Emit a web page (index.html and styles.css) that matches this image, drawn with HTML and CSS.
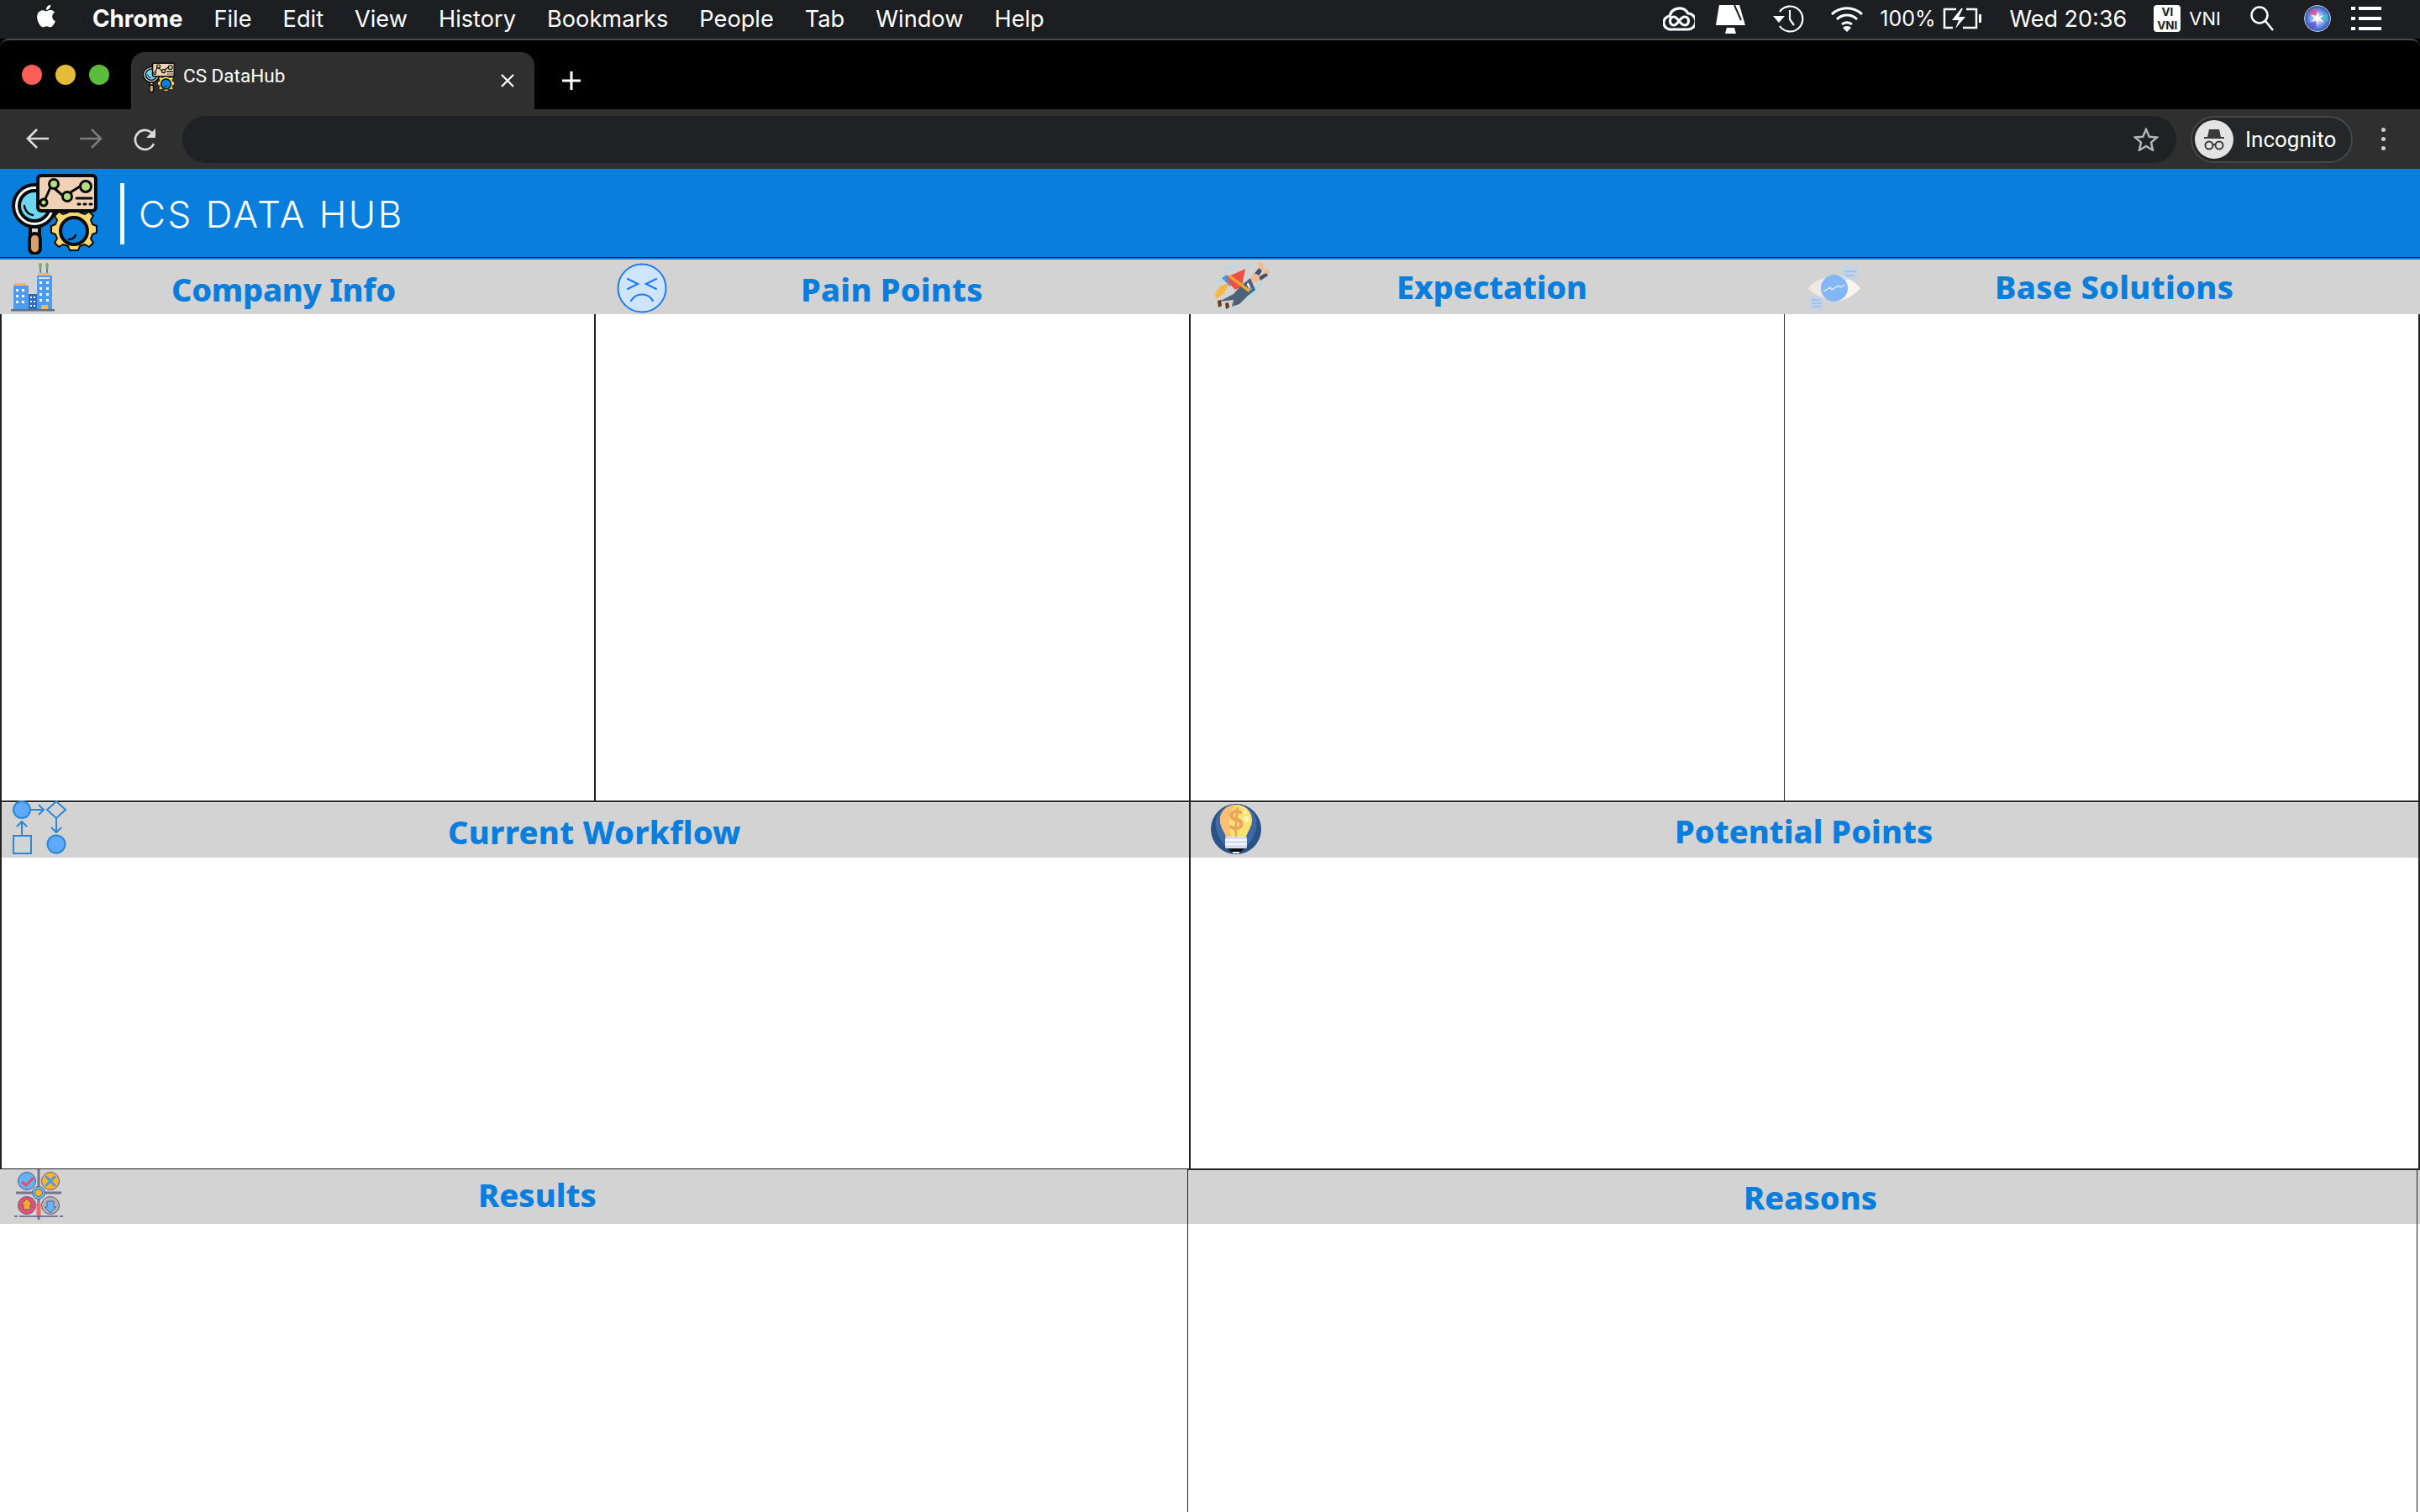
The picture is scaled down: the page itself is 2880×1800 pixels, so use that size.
FILE: index.html
```html
<!DOCTYPE html>
<html lang="en">
<head>
<meta charset="utf-8">
<title>CS DataHub</title>
<link rel="stylesheet" href="styles.css">
</head>
<body>
<svg class="defs" width="0" height="0" aria-hidden="true">
  <symbol id="logo" viewBox="0 0 102 96">
    <g stroke="#0b0b0b" stroke-width="4" stroke-linejoin="round" stroke-linecap="round">
      <rect x="22" y="63" width="11" height="9" fill="#d9d9d9"/>
      <rect x="21" y="71" width="13" height="24" rx="6.5" fill="#d8a06c"/>
      <circle cx="27" cy="38" r="25" fill="#fff"/>
      <circle cx="27" cy="38" r="18" fill="#6fd6f2"/>
      <path d="M74 41l5 0 2 5 6 2 5-3 5 5-3 5 2 5 5 2v8l-5 2-2 5 3 5-5 5-5-3-6 2-2 5h-10l-2-5-6-2-5 3-5-5 3-5-2-5-5-2v-8l5-2 2-5-3-5 5-5 5 3 6-2 2-5z" fill="#fbd96f" stroke-width="2"/>
      <circle cx="74" cy="68" r="16" fill="#0a7edc"/>
      <rect x="31" y="2" width="69" height="42" rx="4" fill="#f0d1b6"/>
      <path d="M38 34L47 14M47 14L62 27M62 27L81 15" fill="none" stroke-width="3"/>
      <circle cx="38" cy="34" r="4" fill="#b4e07e" stroke-width="3"/>
      <circle cx="50" cy="12" r="5.5" fill="#b4e07e" stroke-width="3"/>
      <circle cx="66" cy="27" r="5.5" fill="#b4e07e" stroke-width="3"/>
      <circle cx="88" cy="15" r="6.5" fill="#b4e07e" stroke-width="3"/>
      <path d="M77 29h18" fill="none" stroke-width="3"/>
      <path d="M79 36h2M86 36h2M93 36h2" fill="none" stroke-width="3"/>
      <path d="M68 78a9 9 0 0 0 8-5" fill="none" stroke-width="2.5"/>
      <path d="M15 38a12 12 0 0 0 10 11" fill="none" stroke-width="2.5"/>
    </g>
  </symbol>
</svg>

<div class="menubar">
  <div class="menu-left">
    <svg class="apple" viewBox="0 0 24 24"><path fill="#fff" d="M18.71 19.5c-.83 1.24-1.71 2.45-3.05 2.47-1.34.03-1.77-.79-3.29-.79-1.53 0-2 .77-3.27.82-1.31.05-2.3-1.32-3.14-2.53C4.25 17 2.94 12.45 4.7 9.39c.87-1.52 2.43-2.48 4.12-2.51 1.28-.02 2.5.87 3.29.87.78 0 2.26-1.07 3.81-.91.65.03 2.47.26 3.64 1.98-.09.06-2.17 1.28-2.15 3.81.03 3.02 2.65 4.03 2.68 4.04-.03.07-.42 1.44-1.38 2.83M13 3.5c.73-.83 1.94-1.46 2.94-1.5.13 1.17-.34 2.35-1.04 3.19-.69.85-1.83 1.51-2.95 1.42-.15-1.15.41-2.35 1.05-3.11z"/></svg>
    <span class="menu-app">Chrome</span>
    <span>File</span><span>Edit</span><span>View</span><span>History</span><span>Bookmarks</span><span>People</span><span>Tab</span><span>Window</span><span>Help</span>
  </div>
  <div class="menu-right">
    <svg class="st st-cc" viewBox="0 0 38 30" fill="none" stroke="#fff" stroke-width="3.200"><path d="M10 28a8 8 0 0 1-2-16A12 12 0 0 1 30 9a9.500 9.500 0 0 1-1 19z"/><path d="M13 23c-6 0-6-10 0-10 5 0 7 10 13 10 6 0 6-10 0-10-6 0-8 10-13 10z"/></svg>
    <svg class="st st-lamp" viewBox="0 0 36 36"><path fill="#fff" d="M4 2h24l7 24H0z"/><path fill="none" stroke="#1c1e21" stroke-width="2" d="M22 2l8 18"/><path fill="#fff" d="M13 29h9l2 7H11z"/></svg>
    <svg class="st st-clock" viewBox="0 0 38 34" fill="none" stroke="#fff" stroke-width="2.200"><path d="M9 9a15 15 0 1 1 0 17"/><path fill="#fff" stroke="none" d="M1 14h14l-7 8z"/><path d="M21 7v11l5 7"/></svg>
    <svg class="st st-wifi" viewBox="0 0 40 32" fill="none" stroke="#fff" stroke-width="3"><path d="M2 11a26 26 0 0 1 36 0M8 17a17 17 0 0 1 24 0M14 23a9 9 0 0 1 12 0"/><path fill="#fff" stroke="none" d="M20 32l-5-5a7 7 0 0 1 10 0z"/></svg>
    <span class="st-pct">100%</span>
    <svg class="st st-batt" viewBox="0 0 46 26" fill="none" stroke="#fff" stroke-width="2.500"><path d="M16 2H2v22h10M28 2h12v22H24"/><path fill="#fff" stroke="none" d="M22 1L11 15h8l-4 10 12-14h-8l5-10z"/><rect x="43" y="8" width="3" height="10" fill="#fff" stroke="none"/></svg>
    <span class="st-time">Wed 20:36</span>
    <span class="st-vni"><span>VI</span><span>VNI</span></span>
    <span class="st-vni-text">VNI</span>
    <svg class="st st-search" viewBox="0 0 28 30" fill="none" stroke="#fff" stroke-width="2.500"><circle cx="11" cy="11" r="9.500"/><path d="M18 18l9 11"/></svg>
    <svg class="st st-siri" viewBox="0 0 32 32">
      <defs><radialGradient id="siri" cx="50%" cy="50%" r="55%"><stop offset="0" stop-color="#f4f6ff"/><stop offset=".45" stop-color="#8aa8ec"/><stop offset=".8" stop-color="#3a64c8"/><stop offset="1" stop-color="#222a58"/></radialGradient></defs>
      <circle cx="16" cy="16" r="15.500" fill="url(#siri)" stroke="#cfd3dc" stroke-width="1"/>
      <path d="M5 10a13 13 0 0 1 11-6l-1 9z" fill="#e0508c" opacity=".8"/>
      <path d="M27 9a13 13 0 0 1 1 11l-8-4z" fill="#35c4c8" opacity=".8"/>
      <path d="M5 22a13 13 0 0 0 9 6l1-9z" fill="#6a4ad0" opacity=".7"/>
      <path d="M16 8l2 6 6-2-5 4 5 5-7-3-1 6-2-6-6 2 5-4-5-5 6 2z" fill="#fff" opacity=".9"/>
    </svg>
    <svg class="st st-list" viewBox="0 0 36 28" fill="#fff"><rect x="0" y="0" width="5" height="4"/><rect x="9" y="0" width="27" height="4"/><rect x="0" y="12" width="5" height="4"/><rect x="9" y="12" width="27" height="4"/><rect x="0" y="24" width="5" height="4"/><rect x="9" y="24" width="27" height="4"/></svg>
  </div>
</div>

<div class="browser">
  <div class="tabstrip">
    <div class="lights"><i class="light red"></i><i class="light yellow"></i><i class="light green"></i></div>
    <div class="tab">
      <svg class="favicon"><use href="#logo"/></svg>
      <span class="tab-title">CS DataHub</span>
      <svg class="tab-close" viewBox="0 0 16 16" stroke="#fff" stroke-width="2.200"><path d="M1 1l14 14M15 1L1 15"/></svg>
    </div>
    <svg class="newtab" viewBox="0 0 22 22" stroke="#fff" stroke-width="3"><path d="M11 0v22M0 11h22"/></svg>
  </div>
  <div class="toolbar">
    <svg class="nav nav-back" viewBox="0 0 28 26" fill="none" stroke="#dcdcdc" stroke-width="2.600"><path d="M28 13H3M14 2L3 13l11 11"/></svg>
    <svg class="nav nav-fwd" viewBox="0 0 28 26" fill="none" stroke="#7b7b7b" stroke-width="2.600"><path d="M0 13h25M14 2l11 11-11 11"/></svg>
    <svg class="nav nav-reload" viewBox="0 0 28 28" fill="none" stroke="#dcdcdc" stroke-width="2.600"><path d="M24 19a11.500 11.500 0 1 1-1-11"/><path fill="#dcdcdc" stroke="none" d="M26 1v11H15z"/></svg>
    <div class="omnibox">
      <svg class="star" viewBox="0 0 30 28" fill="none" stroke="#b4b4b4" stroke-width="2.500"><path d="M15 2l3.800 8.700 9.200.8-7 6.100 2.100 9.200L15 22l-8.100 4.800L9 17.600 2 11.500l9.200-.8z"/></svg>
    </div>
    <div class="profile">
      <span class="avatar">
        <svg viewBox="0 0 32 32" fill="#3a3a3a"><path d="M10 4h12l2 9h4v2H4v-2h4z"/><circle cx="10" cy="23" r="4.500" fill="none" stroke="#3a3a3a" stroke-width="2"/><circle cx="22" cy="23" r="4.500" fill="none" stroke="#3a3a3a" stroke-width="2"/><path d="M14.500 22h3" stroke="#3a3a3a" stroke-width="2"/></svg>
      </span>
      <span class="profile-name">Incognito</span>
    </div>
    <div class="kebab"><i></i><i></i><i></i></div>
  </div>
</div>

<header class="apphead">
  <svg class="applogo"><use href="#logo"/></svg>
  <span class="appdiv"></span>
  <span class="appname">CS DATA HUB</span>
</header>

<main class="board">
  <section class="row row-a">
    <article class="cell cell-a1">
      <div class="head head-company">
        <svg class="ic ic-company" viewBox="0 0 52 58">
          <path d="M35 2v12M43 2v12" stroke="#3a6a8a" stroke-width="1.500"/>
          <ellipse cx="35" cy="3" rx="1.800" ry="3.500" fill="#7fa75f"/><ellipse cx="43" cy="3" rx="1.800" ry="3.500" fill="#7fa75f"/>
          <rect x="32" y="12" width="14" height="3" fill="#f2b95c"/>
          <rect x="31" y="15" width="18" height="41" fill="#4d9cf0"/>
          <rect x="4" y="24" width="14" height="3" fill="#f2b95c"/>
          <rect x="3" y="27" width="18" height="29" fill="#4d9cf0"/>
          <rect x="21" y="37" width="10" height="19" fill="#2c6bb8"/>
          <path d="M33 18h13" stroke="#fff" stroke-width="1.500"/>
          <g fill="#fff">
            <rect x="6" y="31" width="3" height="3"/><rect x="13" y="31" width="3" height="3"/><rect x="6" y="38" width="3" height="3"/><rect x="13" y="38" width="3" height="3"/><rect x="6" y="45" width="3" height="3"/><rect x="13" y="45" width="3" height="3"/>
            <rect x="34" y="22" width="3" height="3"/><rect x="42" y="22" width="3" height="3"/><rect x="34" y="29" width="3" height="3"/><rect x="42" y="29" width="3" height="3"/><rect x="34" y="36" width="3" height="3"/><rect x="42" y="36" width="3" height="3"/><rect x="34" y="43" width="3" height="3"/><rect x="42" y="43" width="3" height="3"/>
            <rect x="23" y="40" width="2" height="2"/><rect x="27" y="40" width="2" height="2"/><rect x="23" y="45" width="2" height="2"/><rect x="27" y="45" width="2" height="2"/><rect x="23" y="50" width="2" height="2"/><rect x="27" y="50" width="2" height="2"/>
          </g>
          <rect x="36" y="50" width="8" height="6" fill="#f2b95c"/>
          <rect x="0" y="55" width="52" height="2.500" fill="#5d7288"/>
        </svg>
        <h2 class="title">Company Info</h2>
      </div>
      <div class="body"></div>
    </article>
    <article class="cell cell-a2">
      <div class="head head-pain">
        <svg class="ic ic-pain" viewBox="0 0 60 60" fill="none" stroke="#1f7bef" stroke-linecap="round">
          <circle cx="30" cy="30" r="28.500" fill="#cfe4ff" stroke-width="2"/>
          <path d="M13 19l12 6-12 6M47 19l-12 6 12 6" stroke-width="2.200"/>
          <path d="M17 45c6-10 20-10 26 0" stroke-width="2.200"/>
        </svg>
        <h2 class="title">Pain Points</h2>
      </div>
      <div class="body"></div>
    </article>
    <article class="cell cell-a3">
      <div class="head head-expect">
        <svg class="ic ic-expect" viewBox="0 0 85 66">
          <g stroke="#a5dfe8" stroke-width="2"><path d="M24 13L36 7M13 28l6-3M49 9l8-5M47 49l15-12M53 43l15-16M34 60l5-3"/></g>
          <path d="M11 43l6-10 12-5-8 14-9 6z" fill="#fbb63b"/>
          <path d="M19 23l6-4 9 8-5 6z" fill="#3d9be0"/>
          <path d="M25 22l22-10-4 21-8 4-8-9z" fill="#ee5047"/>
          <path d="M16 51l17-9 9-10 11-9 6 14-9 7-10 10-9 3 2-8-8 1z" fill="#4f6079"/>
          <path d="M14 50l4-1 1 7-4 2z M23 53l4-1 1 6-4 2z" fill="#6b3a1c"/>
          <path d="M30 20l23 17-2 3-24-18z" fill="#f0a52b"/>
          <path d="M50 28l5 8-2 2-4-7z" fill="#fff"/>
          <path d="M52 30l3 7-2 1z" fill="#2f7fd8"/>
          <path d="M54 23l9-12 4 3-7 12z M63 22l9-6 2 4-9 6z" fill="#42526a"/>
          <circle cx="59" cy="23" r="5" fill="#f4b78f"/>
          <path d="M62 5l6 0 1 7-4 1z M69 12l6 1 1 4-6 1z" fill="#f4b78f"/>
        </svg>
        <h2 class="title">Expectation</h2>
      </div>
      <div class="body"></div>
    </article>
    <article class="cell cell-a4">
      <div class="head head-base">
        <svg class="ic ic-base" viewBox="0 0 62 52">
          <path d="M0 26C14 8 48 8 62 26 48 44 14 44 0 26z" fill="#f0e8e2"/>
          <path d="M34 10C46 12 54 18 62 26 54 34 46 40 34 42z" fill="#f8f4f0"/>
          <circle cx="31" cy="26" r="16" fill="#82b6f6"/>
          <path d="M18 30l8-5 2 3 8-5 2 2 6-3" fill="none" stroke="#d2e6fb" stroke-width="1.500"/>
          <g fill="none" stroke="#a9cdf7" stroke-width="1.500">
            <rect x="40" y="0" width="20" height="16" fill="#bcd5f2" stroke="none" opacity=".6"/>
            <rect x="2" y="36" width="16" height="16" fill="#bcd5f2" stroke="none" opacity=".6"/>
            <path d="M44 6h13M44 11h9M4 40h10M4 44h12M4 48h12" stroke="#8fbcf2"/>
          </g>
        </svg>
        <h2 class="title">Base Solutions</h2>
      </div>
      <div class="body"></div>
    </article>
  </section>

  <section class="row row-b">
    <article class="cell cell-b1">
      <div class="head head-flow">
        <svg class="ic ic-flow" viewBox="0 0 66 66" fill="none" stroke="#2a88d4" stroke-width="2">
          <circle cx="11" cy="11" r="10" fill="#5ea9fb"/>
          <path d="M21 11h15M31 5l6 6-6 6"/>
          <path d="M52 1l11 10-11 10-11-10z"/>
          <path d="M52 21v17M46 32l6 6 6-6"/>
          <circle cx="52" cy="52" r="10.500" fill="#5ea9fb"/>
          <rect x="1" y="42" width="21" height="21"/>
          <path d="M11 42V25M5 31l6-6 6 6"/>
        </svg>
        <h2 class="title">Current Workflow</h2>
      </div>
      <div class="body"></div>
    </article>
    <article class="cell cell-b2">
      <div class="head head-potential">
        <svg class="ic ic-potential" viewBox="0 0 60 60">
          <circle cx="30" cy="30" r="30" fill="#2b5285"/>
          <path d="M6 18C4 34 12 48 22 52h16c10-4 18-18 16-34C50 6 40 1 30 1S10 6 6 18z" fill="#3e6aa6"/>
          <path d="M30 1c-11 0-19 8-19 18 0 10 6 13 8 24h22c2-11 8-14 8-24C49 9 41 1 30 1z" fill="#fee26e"/>
          <path d="M30 1c-11 0-19 8-19 18 0 10 6 13 8 24h6C22 30 18 14 30 1z" fill="#fdbe78"/>
          <path d="M30 26v17" stroke="#eda55e" stroke-width="2"/>
          <text x="30" y="31" class="bulb-dollar" text-anchor="middle">$</text>
          <circle cx="42" cy="18" r="3.500" fill="#fff3c0"/><circle cx="41" cy="10" r="2" fill="#fff3c0"/>
          <rect x="17" y="39" width="26" height="14" rx="2" fill="#d7def3"/>
          <path d="M17 43h26M17 48h26" stroke="#fff" stroke-width="1.500"/>
          <path d="M20 53h20l-4 4H24z" fill="#111"/>
          <rect x="26" y="57" width="8" height="2" fill="#eee"/>
        </svg>
        <h2 class="title">Potential Points</h2>
      </div>
      <div class="body"></div>
    </article>
  </section>

  <section class="row row-c">
    <article class="cell cell-c1">
      <div class="head head-results">
        <svg class="ic ic-results" viewBox="0 0 58 60" stroke="#5d5a8a" stroke-width="1">
          <path d="M29 0v60M2 28h54" stroke="#77748f" stroke-width="3"/>
          <circle cx="15" cy="14" r="10.500" fill="#62b5f4"/><path d="M9 15l5 4 9-9" fill="none" stroke="#e94c62" stroke-width="3"/>
          <circle cx="43" cy="14" r="10.500" fill="#fdb42a"/><path d="M37 8l12 12M49 8L37 20" fill="none" stroke="#4a9ae8" stroke-width="3"/>
          <circle cx="15" cy="43" r="10.500" fill="#ee4e70"/><path d="M15 35l7 7h-3v6h-8v-6H8z" fill="#f7a92c"/>
          <circle cx="43" cy="43" r="10.500" fill="#b2b2b2"/><path d="M43 52l-7-7h3v-7h8v7h3z" fill="#62b5f4"/>
          <circle cx="29" cy="28" r="7.500" fill="#62c4f4"/><circle cx="29" cy="28" r="4.500" fill="#fdb42a"/>
          <rect x="26.500" y="39" width="5" height="17" rx="2.500" fill="#ee6a6a" stroke="none"/>
          <path d="M0 56h4M6 56h46M54 56h4" stroke-width="1.500"/>
        </svg>
        <h2 class="title">Results</h2>
      </div>
      <div class="body"></div>
    </article>
    <article class="cell cell-c2">
      <div class="head head-reasons">
        <h2 class="title">Reasons</h2>
      </div>
      <div class="body"></div>
    </article>
  </section>
</main>
</body>
</html>
```
FILE: styles.css
```css
* { box-sizing: border-box; }
html, body { margin: 0; padding: 0; }
body { width: 2880px; height: 1800px; overflow: hidden; background: #fff; font-family: "Inter", "Liberation Sans", sans-serif; color: #fff; }
.defs { display: block; height: 0; }

.menubar { height: 46px; background: #1c1e21; display: flex; justify-content: space-between; font-size: 27.2px; }
.menu-left { display: flex; align-items: center; gap: 37px; height: 44px; padding-left: 39px; }
.apple { width: 32px; height: 36px; margin-right: 2px; margin-top: -6px; }
.menu-app { font-weight: 700; font-size: 27.8px; }
.menu-right { position: relative; flex: 1; height: 44px; display: flex; align-items: center; justify-content: flex-end; }
.st { display: block; flex: none; }
.st-cc { width: 38px; height: 30px; margin-right: 25px; }
.st-lamp { width: 36px; height: 36px; margin-right: 31px; }
.st-clock { width: 38px; height: 34px; margin-right: 31px; }
.st-wifi { width: 40px; height: 32px; margin-right: 19px; }
.st-pct { font-size: 25px; margin-right: 8px; }
.st-batt { width: 46px; height: 26px; margin-right: 34px; }
.st-time { font-size: 27px; margin-right: 32px; }
.st-vni { width: 32px; height: 32px; border-radius: 4px; background: #fff; color: #1c1e21; display: flex; flex-direction: column; align-items: center; font-size: 13.5px; line-height: 16px; font-weight: 700; margin-right: 10px; }
.st-vni-text { font-size: 22px; margin-right: 35px; }
.st-search { width: 28px; height: 30px; margin-right: 36px; }
.st-siri { width: 32px; height: 32px; margin-right: 24px; }
.st-list { width: 36px; height: 28px; margin-right: 46px; }

.browser { background: #000; }
.tabstrip { height: 84px; background: #000; border-top: 2px solid #4a4a4a; border-radius: 10px 10px 0 0; display: flex; align-items: flex-end; }
.lights { display: flex; gap: 16px; align-self: flex-start; padding: 29px 0 0 26px; width: 156px; }
.light { display: block; width: 24px; height: 24px; border-radius: 50%; }
.red { background: #fd5f57; }
.yellow { background: #e5bb3a; }
.green { background: #5cbc3c; }
.tab { width: 480px; height: 68px; background: #2f2f2f; border-radius: 16px 16px 0 0; display: flex; align-items: center; padding-left: 14px; position: relative; }
.favicon { width: 38px; height: 39px; margin-top: -8px; }
.tab-title { font-family: "Roboto", sans-serif; font-size: 22.5px; margin-left: 10px; margin-top: -13px; }
.tab-close { width: 16px; height: 16px; position: absolute; left: 440px; top: 26px; }
.newtab { width: 22px; height: 22px; margin: 0 0 23px 33px; }

.toolbar { height: 71px; background: #2f2f2f; display: flex; align-items: flex-start; }
.nav { height: 26px; width: 28px; margin-top: 22px; flex: none; }
.nav-back { margin-left: 30px; }
.nav-fwd { margin-left: 37px; }
.nav-reload { margin-left: 36px; height: 28px; }
.omnibox { margin: 8px 0 0 30px; width: 2373px; height: 56px; background: #202124; border-radius: 28px; display: flex; align-items: center; justify-content: flex-end; padding-right: 21px; flex: none; }
.star { width: 30px; height: 28px; }
.profile { margin: 8px 0 0 17px; width: 193px; height: 56px; border: 2px solid #474747; border-radius: 28px; display: flex; align-items: center; padding-left: 3px; background: #252628; flex: none; }
.avatar { width: 46px; height: 46px; border-radius: 50%; background: #e3e3e3; display: flex; align-items: center; justify-content: center; flex: none; }
.avatar svg { width: 32px; height: 32px; }
.profile-name { font-family: "Roboto", sans-serif; font-size: 26px; margin-left: 14px; }
.kebab { margin: 22px 0 0 34px; display: flex; flex-direction: column; gap: 6px; }
.kebab i { display: block; width: 5px; height: 5px; border-radius: 50%; background: #d0d0d0; }

.apphead { height: 108px; background: #0a7edc; border-bottom: 2px solid #0a7edc; display: flex; align-items: flex-start; position: relative; }
.apphead::after { content: ""; position: absolute; left: 0; right: 0; bottom: 0; height: 1.5px; background: #0d2038; }
.applogo { width: 102px; height: 96px; margin: 6px 0 0 14px; flex: none; }
.appdiv { width: 5px; height: 73px; background: #fff; margin: 17px 0 0 27px; }
.appname { font-family: "Inter", sans-serif; font-weight: 300; font-size: 44px; letter-spacing: 2.5px; margin: 23px 0 0 17px; line-height: 62px; }

.board { display: flex; flex-direction: column; height: 1491px; }
.row { display: flex; }
.row-a { height: 646px; }
.row-b { height: 438px; }
.row-c { flex: 1; margin-top: -1px; }
.cell { display: flex; flex-direction: column; }
.head { height: 65px; background: #d3d3d3; display: flex; align-items: center; flex: none; position: relative; }
.body { flex: 1; }
.title { margin: 0; font-family: "Noto Sans", sans-serif; font-weight: 800; font-size: 38px; line-height: 1; color: #0a7edc; white-space: nowrap; }
.ic { position: absolute; display: block; }
.bulb-dollar { font-family: "Lato", sans-serif; font-weight: 900; font-size: 32px; fill: #eda55e; }

.cell-a1 { width: 707px; }
.cell-a2 { width: 708px; }
.cell-a3 { width: 708px; }
.cell-a4 { flex: 1; }
.row-a .body { border-left: 2px solid #222; border-bottom: 2px solid #222; }
.cell-a4 .body { border-right: 2px solid #222; border-left-width: 1px; }

.cell-b1 { width: 1415px; border-left: 2px solid #222; }
.cell-b2 { flex: 1; border-left: 2px solid #222; border-right: 2px solid #222; }
.row-b .cell { border-bottom: 2px solid #222; padding-top: 1px; }
.cell-c1 { width: 1413px; }
.cell-c2 { flex: 1; border-left: 1px solid #222; margin-top: 1px; position: relative; }
.cell-c2 .head { height: 64px; }
.cell-c2::after { content: ""; position: absolute; top: 0; bottom: 0; right: 3px; width: 1px; background: #222; }

.head-company .title { margin-left: 204px; margin-top: 5px; letter-spacing: -.3px; }
.head-pain .title { margin-left: 246px; margin-top: 4px; letter-spacing: .2px; }
.head-expect .title { margin-left: 247px; margin-bottom: 2px; letter-spacing: -.2px; }
.head-base .title { margin-left: 251px; margin-bottom: 2px; letter-spacing: .3px; }
.head-flow .title { margin-left: 531px; margin-top: 2px; letter-spacing: .25px; }
.head-potential .title { margin-left: 576px; margin-top: 1px; }
.head-results .title { margin-left: 569px; margin-bottom: 5px; }
.head-reasons .title { margin-left: 661px; }

.ic-company { left: 13px; top: 4px; width: 52px; height: 58px; }
.ic-pain { left: 27px; top: 4px; width: 60px; height: 60px; }
.ic-expect { left: 20px; top: -1px; width: 85px; height: 66px; }
.ic-base { left: 29px; top: 8px; width: 62px; height: 52px; }
.ic-flow { left: 13px; top: -3px; width: 66px; height: 66px; }
.ic-potential { left: 24px; top: 1px; width: 60px; height: 60px; }
.ic-results { left: 17px; top: 0; width: 58px; height: 60px; }
```
